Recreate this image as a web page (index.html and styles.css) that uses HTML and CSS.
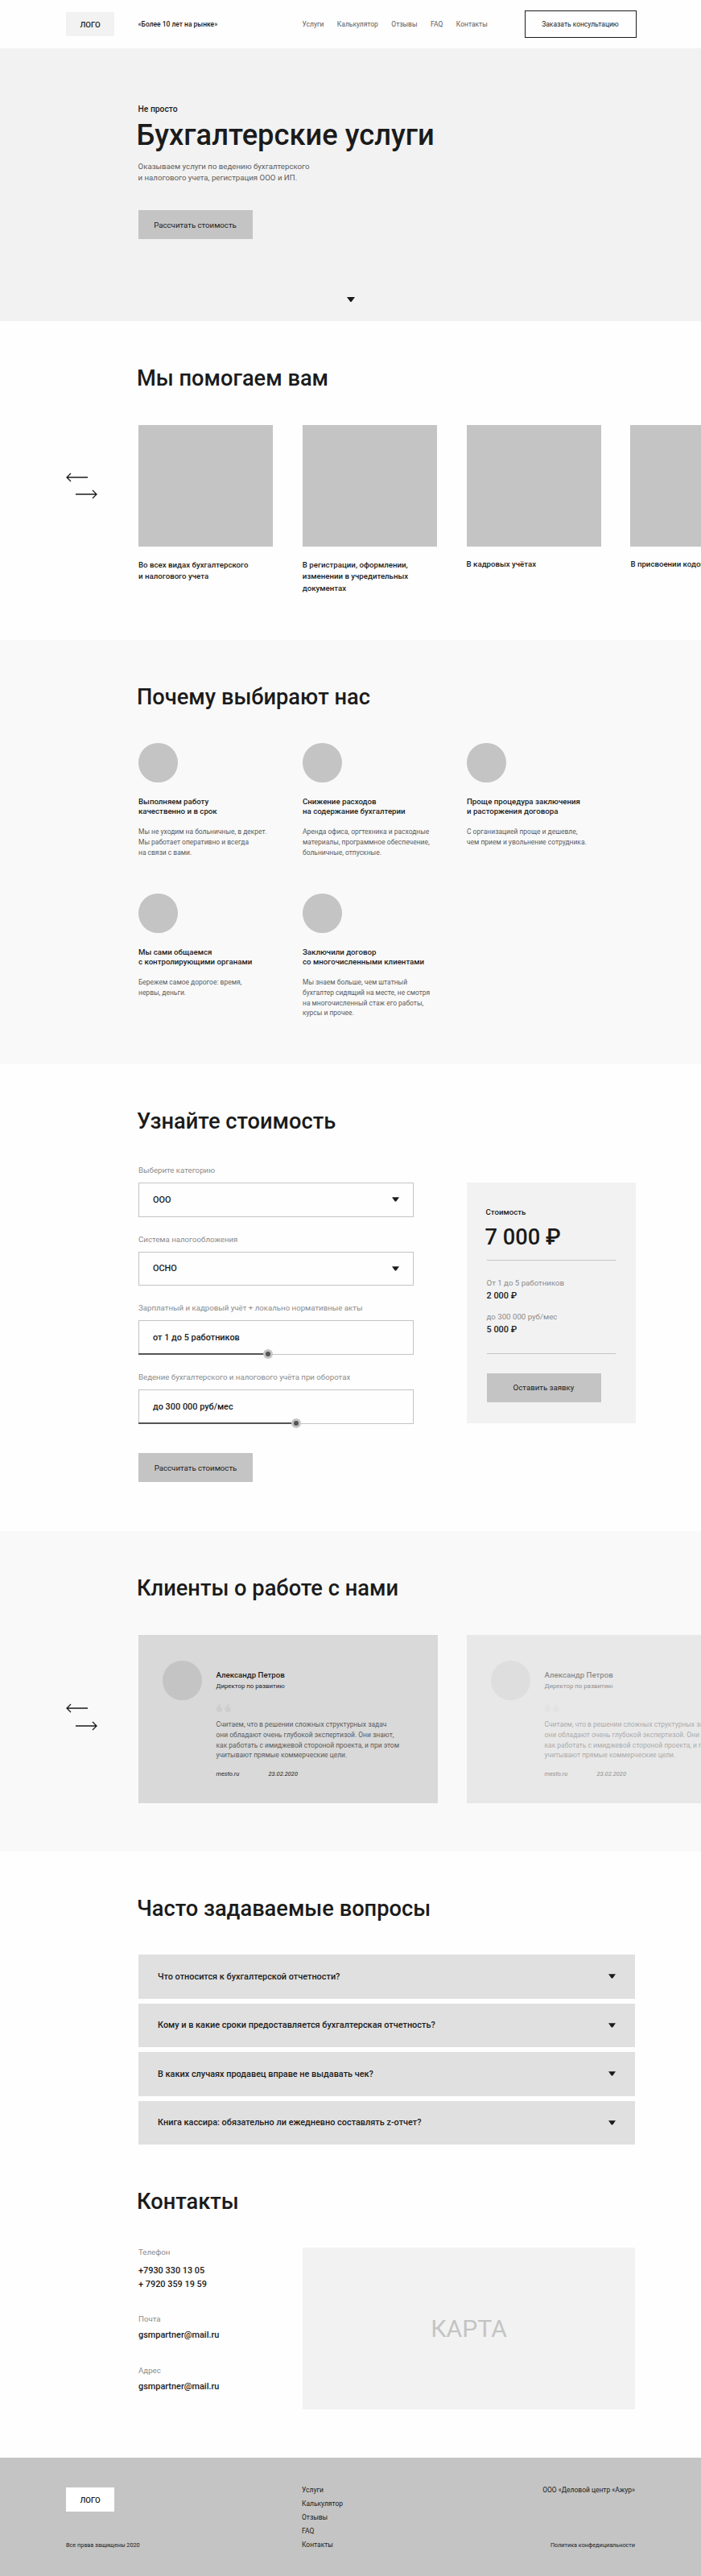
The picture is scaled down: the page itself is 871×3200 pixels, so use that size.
FILE: index.html
```
<!DOCTYPE html>
<html lang="ru">
<head>
    <meta charset="UTF-8">
    <meta name="viewport" content="width=device-width, initial-scale=1.0">
    <title>Бухгалтерские услуги</title>
    <link rel="stylesheet" href="styles.css">
</head>
<body>
    <header class="header">
        <a href="#" class="logo">ЛОГО</a>
        <p class="slogan">«Более 10 лет на рынке»</p>
        <nav class="nav">
            <a href="#help">Услуги</a>
            <a href="#calc">Калькулятор</a>
            <a href="#reviews">Отзывы</a>
            <a href="#faq">FAQ</a>
            <a href="#contacts">Контакты</a>
        </nav>
        <a href="#" class="header-btn">Заказать консультацию</a>
    </header>

    <section class="hero">
        <p class="hero-top">Не просто</p>
        <h1>Бухгалтерские услуги</h1>
        <p class="hero-text">Оказываем услуги по ведению бухгалтерского<br>и налогового учета, регистрация ООО и ИП.</p>
        <a href="#calc" class="btn">Рассчитать стоимость</a>
        <svg class="hero-arrow" width="10" height="6" viewBox="0 0 10 6"><path d="M0 0h10L6 5.4Q5 6.4 4 5.4z" fill="#1b1b1b"/></svg>
    </section>

    <section class="section help" id="help">
        <h2>Мы помогаем вам</h2>
        <div class="arrows">
            <svg width="27" height="12" viewBox="0 0 27 12"><path d="M27 6H1M6 1L1 6l5 5"/></svg>
            <svg class="next" width="27" height="12" viewBox="0 0 27 12"><path d="M0 6h26M21 1l5 5-5 5"/></svg>
        </div>
        <div class="help-list">
            <div class="help-item">
                <div class="help-img"></div>
                <p>Во всех видах бухгалтерского<br>и налогового учета</p>
            </div>
            <div class="help-item">
                <div class="help-img"></div>
                <p>В регистрации, оформлении,<br>изменении в учредительных<br>документах</p>
            </div>
            <div class="help-item short">
                <div class="help-img"></div>
                <p>В кадровых учётах</p>
            </div>
            <div class="help-item short">
                <div class="help-img"></div>
                <p>В присвоении кодов</p>
            </div>
        </div>
    </section>

    <section class="section why">
        <h2>Почему выбирают нас</h2>
        <div class="why-list">
            <div class="why-item">
                <div class="circle"></div>
                <h3>Выполняем работу<br>качественно и в срок</h3>
                <p>Мы не уходим на больничные, в декрет.<br>Мы работает оперативно и всегда<br>на связи с вами.</p>
            </div>
            <div class="why-item">
                <div class="circle"></div>
                <h3>Снижение расходов<br>на содержание бухгалтерии</h3>
                <p>Аренда офиса, оргтехника и расходные<br>материалы, программное обеспечение,<br>больничные, отпускные.</p>
            </div>
            <div class="why-item">
                <div class="circle"></div>
                <h3>Проще процедура заключения<br>и расторжения договора</h3>
                <p>С организацией проще и дешевле,<br>чем прием и увольнение сотрудника.</p>
            </div>
            <div class="why-item">
                <div class="circle"></div>
                <h3>Мы сами общаемся<br>с контролирующими органами</h3>
                <p>Бережем самое дорогое: время,<br>нервы, деньги.</p>
            </div>
            <div class="why-item">
                <div class="circle"></div>
                <h3>Заключили договор<br>со многочисленными клиентами</h3>
                <p>Мы знаем больше, чем штатный<br>бухгалтер сидящий на месте, не смотря<br>на многочисленный стаж его работы,<br>курсы и прочее.</p>
            </div>
        </div>
    </section>

    <section class="section calc" id="calc">
        <h2>Узнайте стоимость</h2>
        <div class="calc-row">
            <form class="calc-form">
                <div class="field">
                    <label>Выберите категорию</label>
                    <div class="field-box">ООО
                        <svg width="9" height="6" viewBox="0 0 10 6"><path d="M0 0h10L6 5.4Q5 6.4 4 5.4z" fill="#1b1b1b"/></svg>
                    </div>
                </div>
                <div class="field">
                    <label>Система налогообложения</label>
                    <div class="field-box">ОСНО
                        <svg width="9" height="6" viewBox="0 0 10 6"><path d="M0 0h10L6 5.4Q5 6.4 4 5.4z" fill="#1b1b1b"/></svg>
                    </div>
                </div>
                <div class="field">
                    <label>Зарплатный и кадровый учёт + локально нормативные акты</label>
                    <div class="field-box">от 1 до 5 работников
                        <div class="range" style="width: 47.4%"></div>
                    </div>
                </div>
                <div class="field">
                    <label>Ведение бухгалтерского и налогового учёта при оборотах</label>
                    <div class="field-box">до 300 000 руб/мес
                        <div class="range" style="width: 57.5%"></div>
                    </div>
                </div>
                <a href="#" class="btn">Рассчитать стоимость</a>
            </form>
            <div class="price">
                <p class="price-title">Стоимость</p>
                <p class="price-total">7 000 ₽</p>
                <div class="price-list">
                    <p>От 1 до 5 работников</p>
                    <b>2 000 ₽</b>
                    <p>до 300 000 руб/мес</p>
                    <b>5 000 ₽</b>
                </div>
                <a href="#" class="btn">Оставить заявку</a>
            </div>
        </div>
    </section>

    <section class="section reviews" id="reviews">
        <h2>Клиенты о работе с нами</h2>
        <div class="arrows">
            <svg width="27" height="12" viewBox="0 0 27 12"><path d="M27 6H1M6 1L1 6l5 5"/></svg>
            <svg class="next" width="27" height="12" viewBox="0 0 27 12"><path d="M0 6h26M21 1l5 5-5 5"/></svg>
        </div>
        <div class="reviews-list">
            <div class="review">
                <div class="circle"></div>
                <div class="review-body">
                    <h3>Александр Петров</h3>
                    <p class="review-post">Директор по развитию</p>
                    <svg class="quote" width="18" height="11" viewBox="0 0 18 11"><path d="M6.5 0C3 1.5 0 4 0 7.3a3.6 3.6 0 0 0 7.2 0C7.2 5.5 6 4.300 4.500 4 4.500 2.500 5.300 1 6.500 0zM17 0c-3.500 1.500-6.500 4-6.500 7.300a3.600 3.600 0 0 0 7.200 0c0-1.800-1.200-3-2.700-3.300 0-1.500.8-3 2-4z" fill="#c4c4c4"/></svg>
                    <p class="review-text">Считаем, что в решении сложных структурных задач<br>они обладают очень глубокой экспертизой. Они знают,<br>как работать с имиджевой стороной проекта, и при этом<br>учитывают прямые коммерческие цели.</p>
                    <p class="review-meta"><span>mesto.ru</span><span>23.02.2020</span></p>
                </div>
            </div>
            <div class="review next-review">
                <div class="circle"></div>
                <div class="review-body">
                    <h3>Александр Петров</h3>
                    <p class="review-post">Директор по развитию</p>
                    <svg class="quote" width="18" height="11" viewBox="0 0 18 11"><path d="M6.5 0C3 1.5 0 4 0 7.3a3.6 3.6 0 0 0 7.2 0C7.2 5.5 6 4.300 4.500 4 4.500 2.500 5.300 1 6.500 0zM17 0c-3.500 1.500-6.500 4-6.500 7.300a3.600 3.600 0 0 0 7.200 0c0-1.800-1.200-3-2.700-3.300 0-1.500.8-3 2-4z" fill="#c4c4c4"/></svg>
                    <p class="review-text">Считаем, что в решении сложных структурных задач<br>они обладают очень глубокой экспертизой. Они знают,<br>как работать с имиджевой стороной проекта, и при этом<br>учитывают прямые коммерческие цели.</p>
                    <p class="review-meta"><span>mesto.ru</span><span>23.02.2020</span></p>
                </div>
            </div>
        </div>
    </section>

    <section class="section faq" id="faq">
        <h2>Часто задаваемые вопросы</h2>
        <div class="faq-list">
            <div class="faq-item">Что относится к бухгалтерской отчетности?
                <svg width="9" height="6" viewBox="0 0 10 6"><path d="M0 0h10L6 5.4Q5 6.4 4 5.4z" fill="#1b1b1b"/></svg>
            </div>
            <div class="faq-item">Кому и в какие сроки предоставляется бухгалтерская отчетность?
                <svg width="9" height="6" viewBox="0 0 10 6"><path d="M0 0h10L6 5.4Q5 6.4 4 5.4z" fill="#1b1b1b"/></svg>
            </div>
            <div class="faq-item">В каких случаях продавец вправе не выдавать чек?
                <svg width="9" height="6" viewBox="0 0 10 6"><path d="M0 0h10L6 5.4Q5 6.4 4 5.4z" fill="#1b1b1b"/></svg>
            </div>
            <div class="faq-item">Книга кассира: обязательно ли ежедневно составлять z-отчет?
                <svg width="9" height="6" viewBox="0 0 10 6"><path d="M0 0h10L6 5.4Q5 6.4 4 5.4z" fill="#1b1b1b"/></svg>
            </div>
        </div>
    </section>

    <section class="section contacts" id="contacts">
        <h2>Контакты</h2>
        <div class="contacts-row">
            <div class="contacts-list">
                <p class="contacts-label">Телефон</p>
                <p class="phones">+7930 330 13 05<br>+ 7920 359 19 59</p>
                <p class="contacts-label">Почта</p>
                <p class="mail">gsmpartner@mail.ru</p>
                <p class="contacts-label">Адрес</p>
                <p class="mail">gsmpartner@mail.ru</p>
            </div>
            <div class="map">КАРТА</div>
        </div>
    </section>

    <footer class="footer">
        <div class="footer-left">
            <a href="#" class="logo">ЛОГО</a>
            <p class="small">Все права защищены 2020</p>
        </div>
        <nav class="footer-nav">
            <a href="#help">Услуги</a>
            <a href="#calc">Калькулятор</a>
            <a href="#reviews">Отзывы</a>
            <a href="#faq">FAQ</a>
            <a href="#contacts">Контакты</a>
        </nav>
        <div class="footer-right">
            <p>ООО «Деловой центр «Ажур»</p>
            <p class="small">Политика конфедициальности</p>
        </div>
    </footer>
</body>
</html>
```
FILE: styles.css
```
* {
    margin: 0;
    padding: 0;
    box-sizing: border-box;
}

body {
    font-family: Roboto, "Liberation Sans", sans-serif;
    font-size: 9.68px;
    color: #1b1b1b;
    background-color: #fefefe;
    overflow-x: hidden;
}

a {
    color: inherit;
    text-decoration: none;
}

svg {
    display: block;
}

/* header */
.header {
    display: flex;
    align-items: center;
    height: 60px;
    padding: 0 80.5px 0 82px;
    font-size: 8.47px;
    white-space: nowrap;
}

.logo {
    display: flex;
    justify-content: center;
    align-items: center;
    width: 60px;
    height: 30px;
    background-color: #f2f2f2;
    font-size: 9.68px;
    font-weight: 500;
}

.slogan {
    width: 204px;
    margin-left: 29.5px;
    font-weight: 500;
}

.nav {
    display: flex;
    gap: 16.5px;
    color: #5c5c5c;
}

.header-btn {
    display: flex;
    justify-content: center;
    align-items: center;
    width: 139px;
    height: 34px;
    margin-left: auto;
    border: 1.5px solid #1b1b1b;
    font-size: 8.47px;
}

/* hero */
.hero {
    display: flex;
    flex-direction: column;
    align-items: flex-start;
    height: 339px;
    padding: 69px 0 0 171.5px;
    background-color: #f2f2f2;
}

.hero-top {
    font-size: 10.3px;
    line-height: 14px;
    font-weight: 500;
}

h1 {
    margin: 3px 0 0 -2px;
    font-size: 36.3px;
    line-height: 44px;
    font-weight: 500;
}

.hero-text {
    margin: 10px 0 33px;
    line-height: 14px;
    color: #5c5c5c;
}

.btn {
    display: flex;
    justify-content: center;
    align-items: center;
    width: 142px;
    height: 36px;
    background-color: #c4c4c4;
    font-size: 9.68px;
}

.hero-arrow {
    margin: 72px 0 0 259px;
}

/* sections */
.section {
    position: relative;
    padding: 54px 0 0 172px;
}

h2 {
    margin-left: -2px;
    font-size: 27.25px;
    line-height: 34px;
    font-weight: 500;
}

.circle {
    flex-shrink: 0;
    width: 48.5px;
    height: 48.5px;
    border-radius: 50%;
    background-color: #c4c4c4;
}

.arrows {
    position: absolute;
    left: 82px;
    top: 187.5px;
}

.arrows svg {
    fill: none;
    stroke: #1b1b1b;
    stroke-width: 1.3;
}

.arrows .next {
    margin: 9.5px 0 0 12px;
}

/* help */
.help {
    height: 396px;
}

.help-list {
    display: flex;
    gap: 36.5px;
    margin-top: 41px;
    overflow: hidden;
}

.help-item {
    flex-shrink: 0;
    width: 167.3px;
}

.help-img {
    height: 151px;
    margin-bottom: 15.5px;
    background-color: #c4c4c4;
}

.help-item p {
    font-size: 9.68px;
    line-height: 14.6px;
    font-weight: 500;
    white-space: nowrap;
}

.help-item.short .help-img {
    margin-bottom: 14.5px;
}

/* why */
.why {
    height: 527px;
    background-color: #f9f9f9;
}

.why-list {
    display: grid;
    grid-template-columns: repeat(3, 204px);
    grid-auto-rows: 187px;
    margin-top: 40px;
}

.why-item h3 {
    margin-top: 18px;
    font-size: 9.68px;
    line-height: 12.8px;
    font-weight: 500;
}

.why-item p {
    margin-top: 12px;
    font-size: 8.47px;
    line-height: 12.8px;
    color: #5c5c5c;
    white-space: nowrap;
}

/* calc */
.calc {
    height: 580px;
}

.calc-row {
    display: flex;
    align-items: flex-start;
    margin-top: 37px;
}

.calc-form {
    width: 342px;
}

.field {
    height: 85.7px;
}

.field label {
    display: block;
    margin-bottom: 8px;
    font-size: 9.68px;
    line-height: 14px;
    color: #8c8c8c;
}

.field-box {
    position: relative;
    display: flex;
    justify-content: space-between;
    align-items: center;
    height: 42.5px;
    padding: 0 17px;
    border: 1px solid #c4c4c4;
    font-size: 10.9px;
    font-weight: 500;
}

.range {
    position: absolute;
    left: -1px;
    bottom: -1px;
    height: 2px;
    background-color: #555;
}

.range::after {
    content: '';
    position: absolute;
    right: -6px;
    top: -5px;
    width: 12px;
    height: 12px;
    box-sizing: border-box;
    border: 3px solid #c4c4c4;
    border-radius: 50%;
    background-color: #555;
}

.calc-form .btn {
    margin-top: 15.5px;
}

.price {
    width: 209.5px;
    height: 299px;
    margin: 22px 0 0 66px;
    padding: 29.5px 24.5px 0;
    background-color: #f2f2f2;
}

.price-title {
    margin-left: -1px;
    font-size: 9.68px;
    line-height: 14px;
    font-weight: 500;
}

.price-total {
    margin: 11px 0 15px -2px;
    font-size: 27.25px;
    line-height: 26px;
    font-weight: 500;
}

.price-list {
    height: 117px;
    padding-top: 20px;
    border-top: 1.5px solid #c4c4c4;
    border-bottom: 1.5px solid #c4c4c4;
    color: #8c8c8c;
}

.price-list p,
.price-list b {
    display: block;
    line-height: 16.5px;
    font-weight: 400;
}

.price-list b {
    margin-bottom: 9px;
    font-size: 10.9px;
    font-weight: 500;
    color: #1b1b1b;
}

.price .btn {
    margin-top: 24px;
}

/* reviews */
.reviews {
    height: 398px;
    background-color: #f9f9f9;
}

.reviews .arrows {
    top: 214px;
}

.reviews-list {
    display: flex;
    gap: 36.5px;
    margin-top: 40.5px;
    overflow: hidden;
}

.review {
    display: flex;
    flex-shrink: 0;
    width: 371.5px;
    height: 209px;
    padding: 32.5px 0 0 30px;
    background-color: #d9d9d9;
    white-space: nowrap;
}

.next-review {
    opacity: 0.5;
}

.review-body {
    padding: 11px 0 0 18px;
}

.review h3 {
    font-size: 9.68px;
    line-height: 14px;
    font-weight: 500;
}

.review-post {
    font-size: 7.86px;
    line-height: 13px;
}

.quote {
    margin: 14.5px 0 9.5px;
    opacity: 0.5;
}

.review-text {
    font-size: 8.47px;
    line-height: 12.8px;
    color: #5c5c5c;
}

.review-meta {
    display: flex;
    margin-top: 9.5px;
    font-size: 7.5px;
    line-height: 14px;
    font-style: italic;
}

.review-meta span {
    width: 65px;
}

/* faq */
.faq {
    height: 364px;
}

.faq-list {
    display: grid;
    gap: 6px;
    width: 617px;
    margin-top: 40px;
}

.faq-item {
    display: flex;
    justify-content: space-between;
    align-items: center;
    height: 54.5px;
    padding: 0 24px;
    background-color: #e0e0e0;
    font-size: 10.9px;
    font-weight: 500;
}

/* contacts */
.contacts {
    height: 389px;
}

.contacts-row {
    display: flex;
    margin-top: 40px;
}

.contacts-list {
    width: 204px;
}

.contacts-label {
    line-height: 11px;
    color: #8c8c8c;
}

.phones {
    margin: 9px 0 29px;
    font-size: 10.9px;
    line-height: 17px;
    font-weight: 500;
}

.mail {
    margin: 6px 0 29.5px;
    font-size: 10.9px;
    line-height: 17px;
    font-weight: 500;
}

.map {
    display: flex;
    justify-content: center;
    align-items: center;
    width: 413px;
    height: 200.5px;
    background-color: #f2f2f2;
    font-size: 30.2px;
    color: #c4c4c4;
}

/* footer */
.footer {
    display: flex;
    height: 147px;
    padding: 32px 82px 0;
    background-color: #c4c4c4;
    font-size: 8.47px;
    line-height: 17px;
}

.footer-left,
.footer-right {
    display: flex;
    flex-direction: column;
    justify-content: space-between;
    height: 85px;
}

.footer-left {
    width: 293px;
}

.footer-left .logo {
    margin-top: 5px;
    background-color: #fff;
}

.footer-nav {
    display: flex;
    flex-direction: column;
}

.footer-right {
    margin-left: auto;
    text-align: right;
}

.small {
    font-size: 7.26px;
}
```
